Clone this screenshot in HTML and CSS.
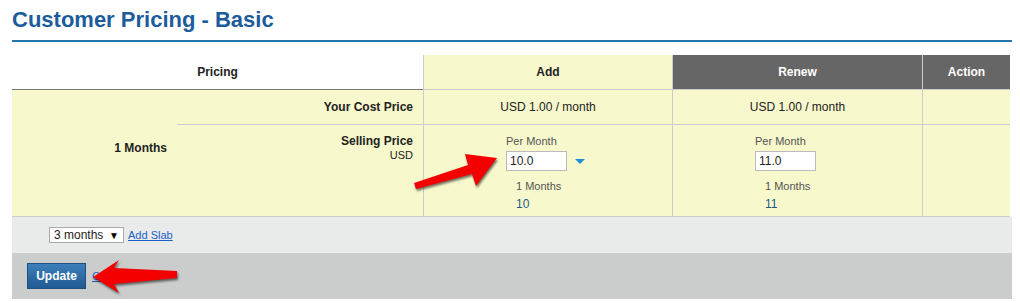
FILE: index.html
```html
<!DOCTYPE html>
<html lang="en">
<head>
    <meta charset="UTF-8">
    <meta name="viewport" content="width=device-width, initial-scale=1.0">
    <title>Customer Pricing - Basic</title>
    <link rel="stylesheet" href="styles.css">
</head>
<body>
    <div class="page">
        <h1 class="title">Customer Pricing - Basic</h1>

        <!-- Pricing table -->
        <table class="pricing">
            <colgroup>
                <col class="col-tenure">
                <col class="col-label">
                <col class="col-add">
                <col class="col-renew">
                <col class="col-action">
            </colgroup>
            <thead>
                <tr>
                    <th colspan="2" class="th-pricing">Pricing</th>
                    <th class="th-add">Add</th>
                    <th class="th-dark">Renew</th>
                    <th class="th-dark">Action</th>
                </tr>
            </thead>
            <tbody>
                <tr class="row-cost">
                    <td rowspan="2" class="tenure">1 Months</td>
                    <td class="label">Your Cost Price</td>
                    <td class="cost">USD 1.00 / month</td>
                    <td class="cost">USD 1.00 / month</td>
                    <td class="empty"></td>
                </tr>
                <tr class="row-sell">
                    <td class="label label-top">Selling Price<span class="unit">USD</span></td>
                    <td class="sell">
                        <div class="per">Per Month</div>
                        <div class="field">
                            <input type="text" class="price-input" value="10.0">
                            <span class="toggle"></span>
                        </div>
                        <div class="period">1 Months</div>
                        <div class="total">10</div>
                    </td>
                    <td class="sell">
                        <div class="per">Per Month</div>
                        <div class="field">
                            <input type="text" class="price-input" value="11.0">
                        </div>
                        <div class="period">1 Months</div>
                        <div class="total">11</div>
                    </td>
                    <td class="empty"></td>
                </tr>
            </tbody>
        </table>

        <!-- Add slab -->
        <div class="slab-bar">
            <span class="slab-select">3 months <span class="caret">&#9660;</span></span>
            <a href="#" class="link">Add Slab</a>
        </div>

        <!-- Buttons -->
        <div class="action-bar">
            <button class="btn-update">Update</button>
            <a href="#" class="link cancel">Cancel</a>
        </div>
    </div>

    <!-- Annotation arrows -->
    <svg class="arrows" width="1020" height="303" viewBox="0 0 1020 303">
        <polygon points="497,158 465,154 468,165 414,183 416,189 472,174 476,186" />
        <polygon points="93,277 119,260 114,268 177,271 177,278 114,284 119,293" />
    </svg>
</body>
</html>
```

FILE: styles.css
```css
/* General body styling */
body {
    margin: 0;
    font-family: "Liberation Sans", Arial, sans-serif;
    font-size: 12px;
    color: #222;
    background: #fff;
}

.page {
    width: 1000px;
    padding: 7px 0 0 12px;
}

/* Title */
.title {
    margin: 0;
    padding-bottom: 7px;
    font-size: 22px;
    line-height: 26px;
    color: #1d5c9c;
    border-bottom: 2px solid #2475ac;
}

/* Pricing table */
.pricing {
    margin-top: 13px;
    width: 998px;
    table-layout: fixed;
    border-collapse: separate;
    border-spacing: 0;
}

.col-tenure { width: 165px; }
.col-label { width: 246px; }
.col-add { width: 249px; }
.col-renew { width: 250px; }
.col-action { width: 88px; }

.pricing th,
.pricing td {
    box-sizing: border-box;
    padding: 0;
}

.pricing th {
    height: 35px;
    font-weight: bold;
    text-align: center;
    border-bottom: 1px solid #ccc;
    border-left: 1px solid #ccc;
}

.pricing th.th-pricing {
    border-left: none;
    background: #fff;
    border-bottom-color: #777;
}

.pricing th.th-add {
    background: #f7f8cc;
}

.pricing th.th-dark {
    background: #666;
    color: #fff;
}

.pricing td {
    background: #f7f8cc;
    border-left: 1px solid #ccc;
    border-bottom: 1px solid #ccc;
}

.pricing td.tenure,
.pricing td.label {
    border-left: none;
}

.row-cost td {
    height: 35px;
}

.row-sell td {
    height: 92px;
}

.pricing td.tenure {
    height: auto;
    text-align: right;
    font-weight: bold;
    padding: 0 10px 10px 0;
    vertical-align: middle;
}

.pricing td.label {
    text-align: right;
    font-weight: bold;
    padding-right: 10px;
}

.pricing td.label-top {
    vertical-align: top;
    padding-top: 9px;
}

.unit {
    display: block;
    font-weight: normal;
    font-size: 11px;
    margin-top: 1px;
}

.cost {
    text-align: center;
}

/* Selling price cells */
.pricing td.sell {
    vertical-align: top;
    padding: 9px 0 0 82px;
}

.per {
    font-size: 11px;
    line-height: 14px;
    color: #555;
}

.field {
    display: flex;
    align-items: center;
    margin-top: 3px;
    height: 20px;
}

.price-input {
    box-sizing: border-box;
    width: 61px;
    height: 20px;
    margin: 0;
    padding: 0 3px;
    border: 1px solid #bbb;
    font-family: "Liberation Sans", Arial, sans-serif;
    font-size: 12px;
    color: #222;
    background: #fff;
}

.toggle {
    margin-left: 8px;
    width: 0;
    height: 0;
    border-left: 5px solid transparent;
    border-right: 5px solid transparent;
    border-top: 5px solid #1e8fd2;
}

.period {
    margin: 8px 0 0 10px;
    font-size: 11px;
    line-height: 14px;
    color: #555;
}

.total {
    margin: 4px 0 0 10px;
    line-height: 14px;
    color: #1f5a85;
}

/* Slab bar */
.slab-bar {
    display: flex;
    align-items: center;
    height: 36px;
    padding-left: 37px;
    background: #e9eaea;
}

.slab-select {
    box-sizing: border-box;
    display: flex;
    justify-content: space-between;
    align-items: center;
    width: 75px;
    height: 16px;
    padding: 0 4px;
    border: 1px solid #aaa;
    background: #fff;
    font-size: 12px;
    color: #222;
}

.caret {
    font-size: 10px;
    color: #000;
}

.link {
    margin-left: 4px;
    font-size: 11px;
    color: #1a5fc8;
    text-decoration: underline;
}

/* Action bar */
.action-bar {
    display: flex;
    align-items: center;
    height: 46px;
    padding-left: 15px;
    background: #cbcccc;
}

.btn-update {
    width: 59px;
    height: 26px;
    padding: 0;
    border: 1px solid #1a4f80;
    background: linear-gradient(#3d7fbb, #1f5a93);
    color: #fff;
    font-family: "Liberation Sans", Arial, sans-serif;
    font-size: 12px;
    font-weight: bold;
    cursor: pointer;
}

.cancel {
    margin-left: 6px;
}

/* Arrows */
.arrows {
    position: absolute;
    top: 0;
    left: 0;
    pointer-events: none;
}

.arrows polygon {
    fill: #f40000;
    filter: drop-shadow(1px 2px 1px rgba(0, 0, 0, 0.55));
}
```
